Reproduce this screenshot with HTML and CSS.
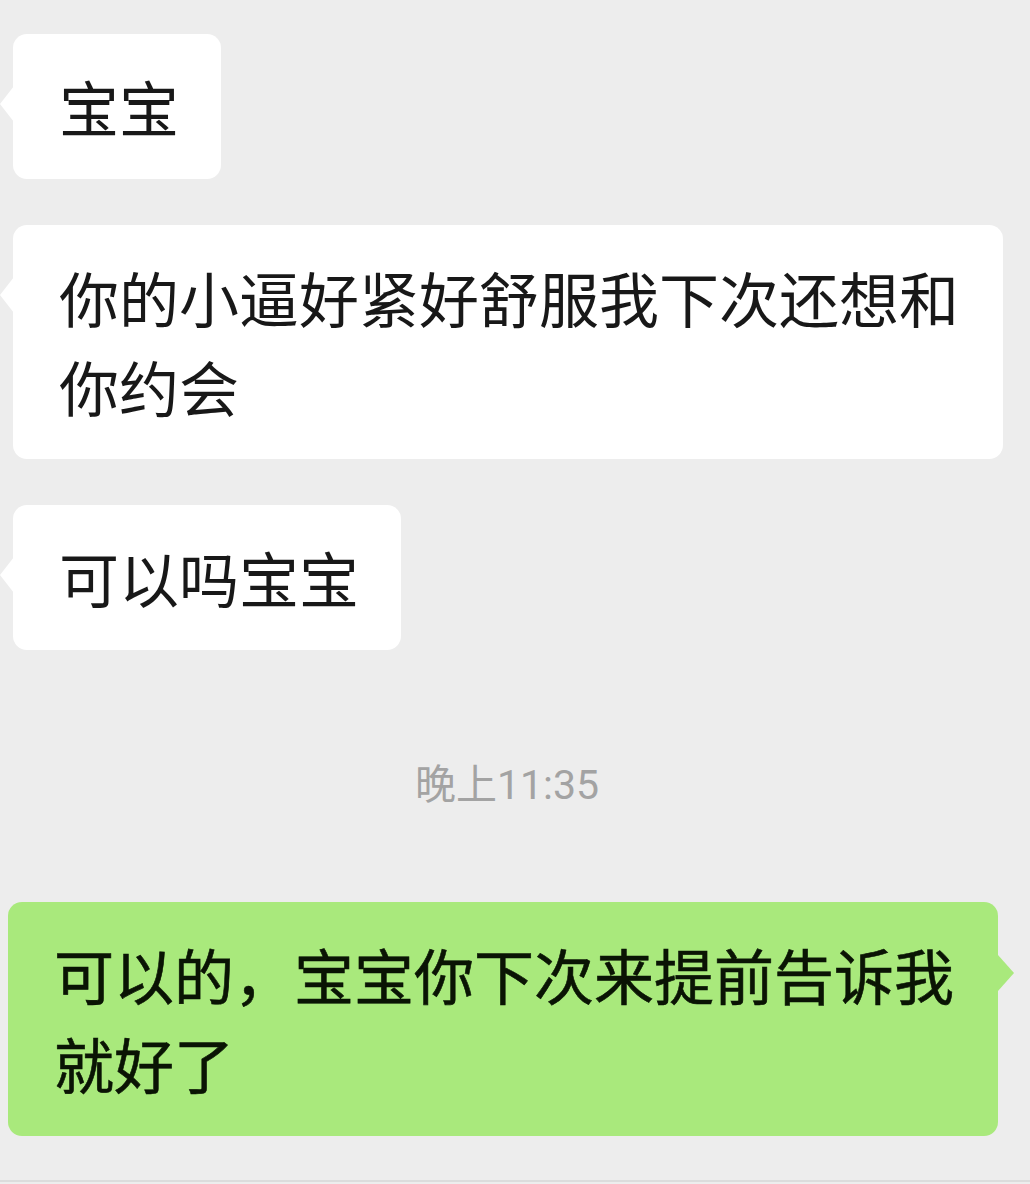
FILE: index.html
```html
<!DOCTYPE html>
<html lang="zh-CN">
<head>
<meta charset="utf-8">
<link rel="stylesheet" href="styles.css">
</head>
<body>
<div class="chat">
  <div class="row left"><div class="bubble recv">宝宝</div></div>
  <div class="row left"><div class="bubble recv">你的小逼好紧好舒服我下次还想和你约会</div></div>
  <div class="row left"><div class="bubble recv">可以吗宝宝</div></div>
  <div class="time">晚上11:35</div>
  <div class="row right"><div class="bubble sent">可以的，宝宝你下次来提前告诉我就好了</div></div>
</div>
</body>
</html>
```
FILE: styles.css
```css
html, body {
  margin: 0;
  padding: 0;
  background: #ededed;
  height: 100%;
}
.chat {
  display: flex;
  flex-direction: column;
  padding: 34px 0 0 0;
  font-family: "Noto Sans CJK SC", "Noto Sans", sans-serif;
  height: 1182px;
  box-sizing: border-box;
  border-bottom: 2px solid #dcdcdc;
}
.row {
  display: flex;
  margin-bottom: 46px;
}
.row.left { padding-left: 13px; }
.row.right { justify-content: flex-end; padding-right: 32px; }
.bubble {
  position: relative;
  font-size: 60px;
  line-height: 89px;
  padding: 27px 42px 29px 46px;
  border-radius: 14px;
  max-width: 990px;
  box-sizing: border-box;
  color: #181818;
}
.recv { background: #ffffff; }
.recv::before {
  content: "";
  position: absolute;
  left: -13px;
  top: 52px;
  border-top: 18px solid transparent;
  border-bottom: 18px solid transparent;
  border-right: 14px solid #ffffff;
}
.sent {
  background: #a9e97c;
  color: #0a1404;
  padding-left: 46px;
  padding-right: 40px;
  width: 990px;
  -webkit-text-stroke: 0.6px #0a1404;
}
.sent::after {
  content: "";
  position: absolute;
  right: -16px;
  top: 53px;
  border-top: 18px solid transparent;
  border-bottom: 18px solid transparent;
  border-left: 16px solid #a9e97c;
}
.time {
  text-align: center;
  font-family: Roboto, "Noto Sans CJK SC", sans-serif;
  font-size: 41px;
  line-height: 50px;
  color: #a3a3a3;
  margin: 64px 16px 92px 0;
}
```
